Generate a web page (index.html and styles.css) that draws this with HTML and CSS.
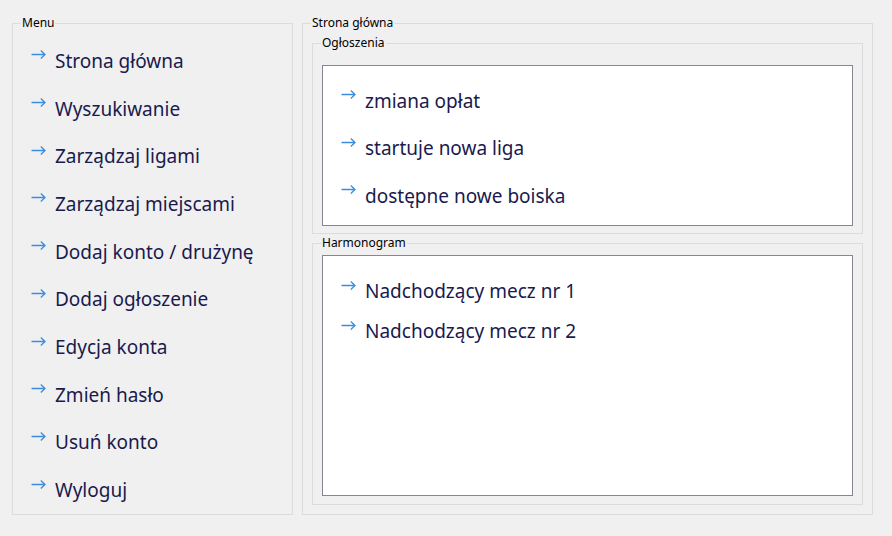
FILE: index.html
```html
<!DOCTYPE html>
<html lang="pl">
<head>
<meta charset="utf-8">
<title>Strona główna</title>
<link rel="stylesheet" href="styles.css">
</head>
<body>
<svg width="0" height="0" class="defs">
  <symbol id="arr" viewBox="0 0 15 9">
    <path d="M0.5 4.5H14M9.8 0.6L14 4.5L9.8 8.4" fill="none" stroke="#3b8de0" stroke-width="1.3"/>
  </symbol>
</svg>
<div class="window">
  <fieldset class="group menu">
    <legend>Menu</legend>
    <ul class="list menu-list">
      <li class="item"><svg class="arrow"><use href="#arr"/></svg><span>Strona główna</span></li>
      <li class="item"><svg class="arrow"><use href="#arr"/></svg><span>Wyszukiwanie</span></li>
      <li class="item"><svg class="arrow"><use href="#arr"/></svg><span>Zarządzaj ligami</span></li>
      <li class="item"><svg class="arrow"><use href="#arr"/></svg><span>Zarządzaj miejscami</span></li>
      <li class="item"><svg class="arrow"><use href="#arr"/></svg><span>Dodaj konto / drużynę</span></li>
      <li class="item"><svg class="arrow"><use href="#arr"/></svg><span>Dodaj ogłoszenie</span></li>
      <li class="item"><svg class="arrow"><use href="#arr"/></svg><span>Edycja konta</span></li>
      <li class="item"><svg class="arrow"><use href="#arr"/></svg><span>Zmień hasło</span></li>
      <li class="item"><svg class="arrow"><use href="#arr"/></svg><span>Usuń konto</span></li>
      <li class="item"><svg class="arrow"><use href="#arr"/></svg><span>Wyloguj</span></li>
    </ul>
  </fieldset>
  <fieldset class="group main">
    <legend>Strona główna</legend>
    <div class="main-body">
      <fieldset class="group news">
        <legend>Ogłoszenia</legend>
        <div class="group-body news-body">
          <ul class="list box news-list">
            <li class="item"><svg class="arrow"><use href="#arr"/></svg><span>zmiana opłat</span></li>
            <li class="item"><svg class="arrow"><use href="#arr"/></svg><span>startuje nowa liga</span></li>
            <li class="item"><svg class="arrow"><use href="#arr"/></svg><span>dostępne nowe boiska</span></li>
          </ul>
        </div>
      </fieldset>
      <fieldset class="group schedule">
        <legend>Harmonogram</legend>
        <div class="group-body schedule-body">
          <ul class="list box schedule-list">
            <li class="item"><svg class="arrow"><use href="#arr"/></svg><span>Nadchodzący mecz nr 1</span></li>
            <li class="item"><svg class="arrow"><use href="#arr"/></svg><span>Nadchodzący mecz nr 2</span></li>
          </ul>
        </div>
      </fieldset>
    </div>
  </fieldset>
</div>
</body>
</html>
```

FILE: styles.css
```css
* { box-sizing: border-box; }
html, body { margin: 0; padding: 0; }
body {
  background: #f0f0f0;
  font-family: "Noto Sans", "Open Sans", sans-serif;
  width: 892px;
  height: 536px;
  overflow: hidden;
}
.defs { position: absolute; }
.window {
  display: flex;
  gap: 9px;
  height: 536px;
  padding: 16px 19px 21px 12px;
}
.group {
  margin: 0;
  padding: 0;
  border: 1px solid #dcdcdc;
  min-width: 0;
  display: flex;
  flex-direction: column;
}
.group > legend {
  font-family: "Noto Sans", sans-serif;
  font-size: 12px;
  line-height: 14px;
  color: #000;
  margin-left: 8px;
  padding: 0 1px;
}
.group-body {
  flex: 1;
  display: flex;
  flex-direction: column;
}
.menu { width: 281px; }
.main { flex: 1; }
.list {
  list-style: none;
  margin: 0;
  display: flex;
  flex-direction: column;
}
.menu-list {
  flex: 1;
  padding: 7px 0 0 18px;
}
.menu-list .item { flex: 1; }
.item {
  display: flex;
  align-items: center;
  font-size: 19px;
  color: #1a1a4e;
  white-space: nowrap;
}
.arrow {
  width: 15px;
  height: 9px;
  margin-right: 9px;
  position: relative;
  top: -6px;
  flex: none;
}
.main-body {
  flex: 1;
  display: flex;
  flex-direction: column;
  gap: 2px;
  padding: 6px 9px 9px 9px;
}
.box {
  background: #fff;
  border: 1px solid #828790;
}
.news { flex: none; }
.news-body { padding: 15px 9px 7px 9px; }
.news-list {
  height: 161px;
  padding: 11px 0 0 18px;
}
.news-list .item { height: 47.5px; }
.schedule { flex: 1; }
.schedule-body { padding: 5px 9px 8px 9px; }
.schedule-list {
  flex: 1;
  padding: 15px 0 0 18px;
}
.schedule-list .item { height: 40px; }
```
